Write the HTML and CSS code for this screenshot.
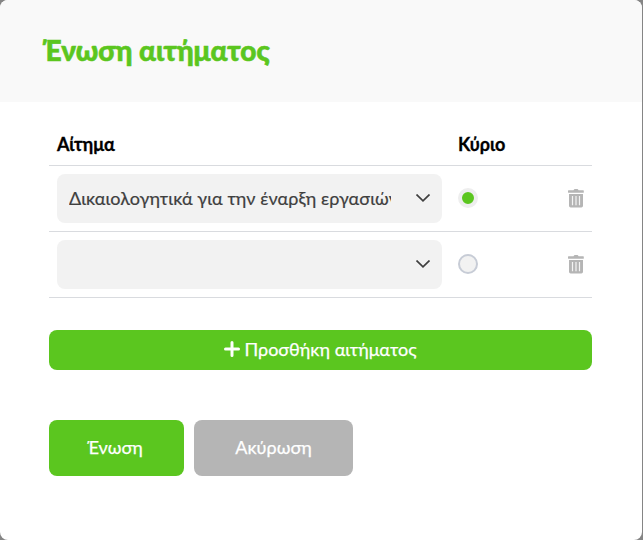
FILE: index.html
```html
<!DOCTYPE html>
<html lang="el">
<head>
<meta charset="utf-8">
<title>Ένωση αιτήματος</title>
<link rel="stylesheet" href="styles.css">
</head>
<body>
<svg class="sprite" aria-hidden="true">
  <symbol id="chevron" viewBox="0 0 14 8"><path d="M0.500 0.500 L7 6.800 L13.500 0.500" fill="none" stroke="#3f3f3f" stroke-width="1.700"/></symbol>
  <symbol id="trash" viewBox="0 0 16 19">
    <path fill="#b5b5b5" d="M5.500 1.200 6.200.3Q6.400 0 6.800 0h2.500q.4 0 .6.3l.7.9h4.600q.6 0 .6.6v1.400q0 .6-.6.6H.6Q0 3.800 0 3.200V1.800q0-.6.6-.6z"/>
    <path fill="#b5b5b5" d="M1 5h14v11.800q0 1.700-1.700 1.700H2.700Q1 18.500 1 16.800z"/>
    <path d="M4.500 7v9.200M8 7v9.200M11.500 7v9.200" stroke="#f4f4f4" stroke-width="1.200"/>
  </symbol>
</svg>
<main class="modal">
  <header class="modal-header"><h1>Ένωση αιτήματος</h1></header>
  <section class="modal-body">
    <div class="row head"><span>Αίτημα</span><span>Κύριο</span></div>
    <div class="row">
      <div class="select"><span class="value">Δικαιολογητικά για την έναρξη εργασιών</span><svg class="chevron"><use href="#chevron"/></svg></div>
      <span class="radio checked"></span>
      <svg class="trash"><use href="#trash"/></svg>
    </div>
    <div class="row">
      <div class="select"><span class="value"></span><svg class="chevron"><use href="#chevron"/></svg></div>
      <span class="radio"></span>
      <svg class="trash"><use href="#trash"/></svg>
    </div>
    <button class="add"><svg class="plus" viewBox="0 0 16 16"><path d="M8 1.500v13M1.500 8h13" stroke="#fff" stroke-width="3" stroke-linecap="round"/></svg><span class="add-text">Προσθήκη αιτήματος</span></button>
    <div class="actions">
      <button class="action merge">Ένωση</button>
      <button class="action cancel">Ακύρωση</button>
    </div>
  </section>
</main>
</body>
</html>
```
FILE: styles.css
```css
* { box-sizing: border-box; }
body { margin: 0; background: #858585; font-family: Lato, "Open Sans", sans-serif; font-size: 18px; color: #000; }
.sprite { display: none; }
.modal { width: 642px; height: 540px; background: #fff; border-radius: 8px; overflow: hidden; }
.modal-header { height: 102px; padding: 0 43px 2px; background: #f9f9f9; display: flex; align-items: center; }
h1 { margin: 0; font-size: 28px; line-height: 36px; font-weight: 900; color: #5bc61f; white-space: nowrap; letter-spacing: -0.05px; -webkit-text-stroke: 0.6px #5bc61f; }
.modal-body { padding: 21px 50px 0 49px; }
.row { height: 66px; display: grid; grid-template-columns: 385px 1fr 16px; column-gap: 16px; align-items: center; padding: 0 8px; border-bottom: 1px solid #d9dbdf; }
.head { height: 43px; font-weight: 700; letter-spacing: -0.05px; -webkit-text-stroke: 0.3px #000; }
.select { height: 49px; background: #f2f2f2; border-radius: 8px; display: flex; align-items: center; justify-content: space-between; padding: 0 12px; }
.value { width: 322px; padding-bottom: 2px; overflow: hidden; white-space: nowrap; color: #3f3f3f; letter-spacing: 0.08px; -webkit-text-stroke: 0.2px #3f3f3f; }
.chevron { width: 14px; height: 8px; margin-bottom: 2px; }
.trash { width: 16px; height: 19px; }
.radio { width: 20px; height: 20px; margin-bottom: 1px; border: 2px solid #c7ccd6; border-radius: 50%; background: #f2f2f2; }
.radio.checked { border: 4px solid #eee; background: #5bc61f; }
button { border: 0; border-radius: 8px; background: #5bc61f; color: #fff; font: inherit; padding: 0 0 2px; white-space: nowrap; -webkit-text-stroke: 0.25px #fff; }
.add { width: 100%; height: 40px; margin-top: 32px; display: flex; align-items: center; justify-content: center; gap: 4px; }
.plus { width: 16px; height: 16px; }
.actions { display: flex; gap: 10px; margin-top: 50px; }
.action { height: 56px; }
.merge { width: 135px; padding-right: 3px; }
.cancel { width: 159px; background: #b5b5b5; }
```
